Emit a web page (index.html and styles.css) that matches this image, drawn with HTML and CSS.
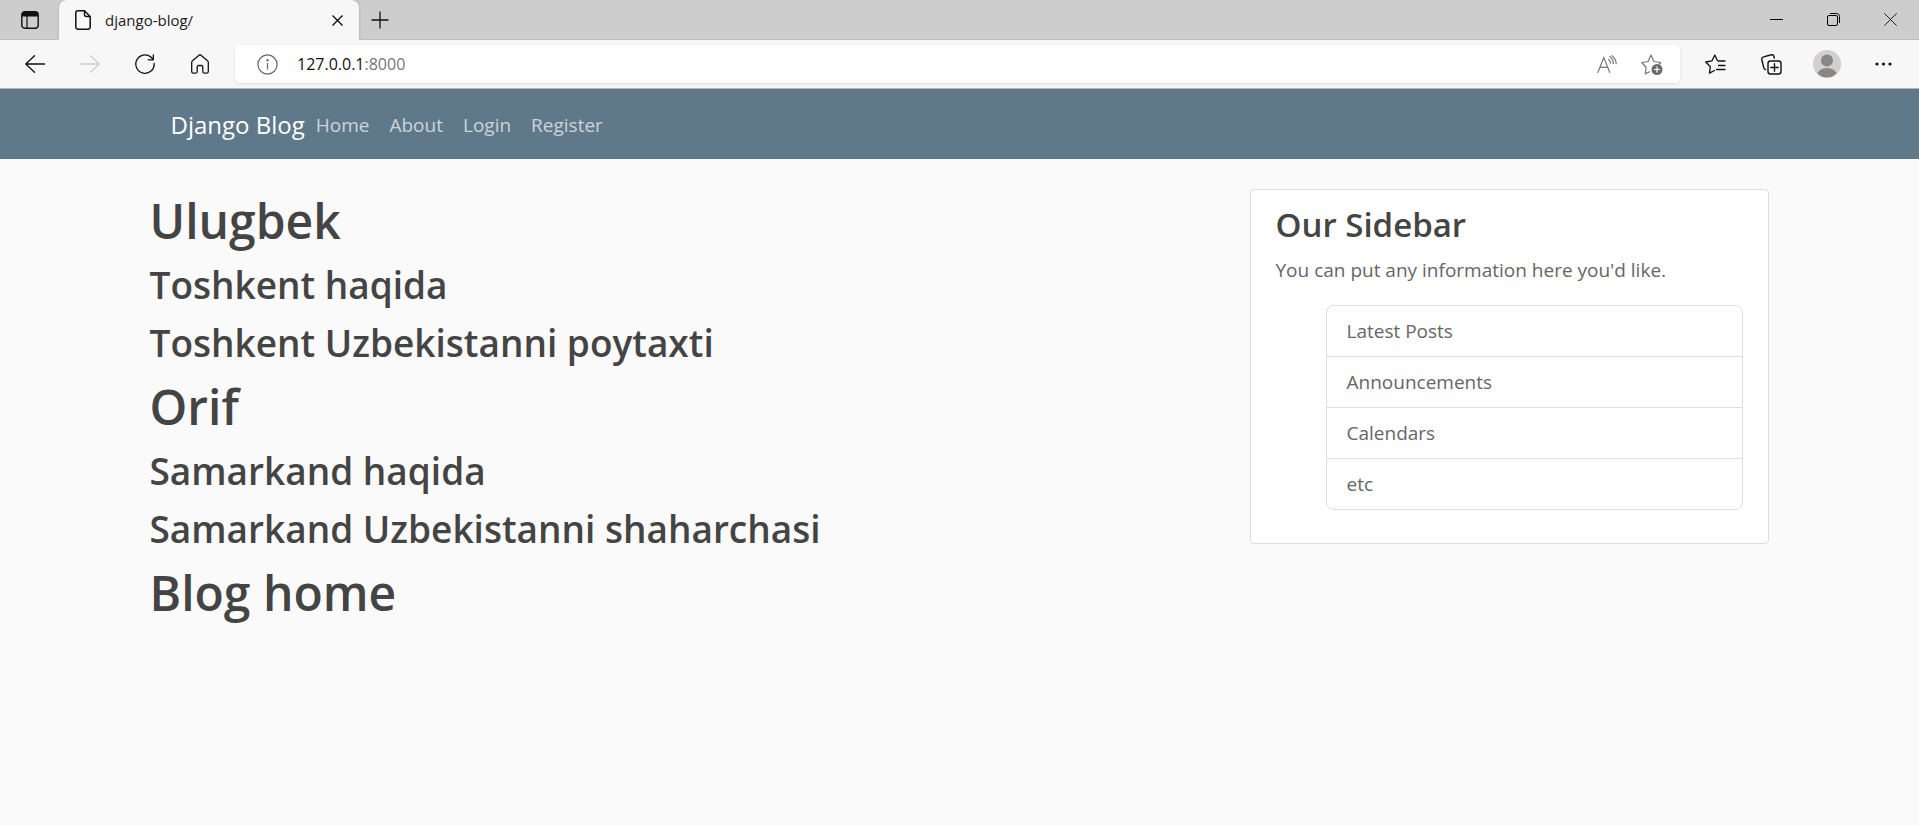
FILE: index.html
```html
<!DOCTYPE html>
<html lang="en">
<head>
<meta charset="utf-8">
<title>django-blog/</title>
<link rel="stylesheet" href="styles.css">
</head>
<body>
<div class="browser">
  <div class="tab-strip">
    <button class="tab-actions" aria-label="Tab actions">
      <svg width="18" height="18" viewBox="0 0 18 18"><rect x="0.8" y="0.8" width="16.4" height="16.4" rx="3" fill="none" stroke="#111" stroke-width="1.4"/><path d="M1 5.5V3.5a2.5 2.5 0 0 1 2.500-2.500h11a2.500 2.500 0 0 1 2.500 2.500v2z" fill="#111"/><path d="M6 5v12" stroke="#111" stroke-width="1.200"/></svg>
    </button>
    <div class="tab">
      <svg width="16" height="20" viewBox="0 0 16 20" fill="none" stroke="#111" stroke-width="1.500" stroke-linejoin="round"><path d="M3 .8h6.500L15.200 6.500V17a2.200 2.200 0 0 1-2.200 2.200H3A2.200 2.200 0 0 1 .8 17V3A2.200 2.200 0 0 1 3 .8z"/><path d="M9.500 1v3.500a2 2 0 0 0 2 2H15"/></svg>
      <span class="tab-title">django-blog/</span>
      <button class="tab-close" aria-label="Close tab"><svg width="11" height="11" viewBox="0 0 11 11" stroke="#111" stroke-width="1.400"><path d="M.5.5l10 10M10.500.5l-10 10"/></svg></button>
    </div>
    <button class="new-tab" aria-label="New tab"><svg width="18" height="18" viewBox="0 0 18 18" stroke="#111" stroke-width="1.300"><path d="M9 0.500v17M.5 9h17"/></svg></button>
    <div class="window-controls">
      <button aria-label="Minimize"><svg width="13" height="13" viewBox="0 0 13 13"><path d="M0 6.500h13" stroke="#000"/></svg></button>
      <button aria-label="Restore"><svg width="13" height="13" viewBox="0 0 13 13" fill="none" stroke="#000"><rect x=".5" y="2.500" width="10" height="10" rx="1.500"/><path d="M3 .5h6.500a3 3 0 0 1 3 3V10"/></svg></button>
      <button aria-label="Close"><svg width="13" height="13" viewBox="0 0 13 13" stroke="#222"><path d="M.3.300l12.400 12.400M12.700.300L.3 12.700"/></svg></button>
    </div>
  </div>
  <div class="toolbar">
    <div class="nav-buttons">
      <button aria-label="Back"><svg width="20" height="18" viewBox="0 0 20 18" fill="none" stroke="#111" stroke-width="1.300" stroke-linecap="round" stroke-linejoin="round"><path d="M9.500.7L.8 9l8.700 8.300M.8 9H19.500"/></svg></button>
      <button aria-label="Forward" disabled><svg width="20" height="18" viewBox="0 0 20 18" fill="none" stroke="#ccc" stroke-width="1.300" stroke-linecap="round" stroke-linejoin="round"><path d="M10.500.7L19.200 9l-8.700 8.300M19.200 9H.5"/></svg></button>
      <button aria-label="Refresh"><svg width="20" height="20" viewBox="0 0 20 20" fill="none" stroke="#111" stroke-width="1.300" stroke-linecap="round" stroke-linejoin="round"><path d="M19.200 9.500A9.200 9.200 0 1 1 15.900 3l2.100 2.300"/><path d="M18.300.8v5h-5"/></svg></button>
      <button aria-label="Home"><svg width="18" height="20" viewBox="0 0 18 20" fill="none" stroke="#111" stroke-width="1.300" stroke-linejoin="round"><path d="M8 1.200a1.500 1.500 0 0 1 2 0l6.500 5.500a2 2 0 0 1 .8 1.600v9.300a1.500 1.500 0 0 1-1.500 1.500h-2.500a1.500 1.500 0 0 1-1.500-1.500V13a1.500 1.500 0 0 0-1.500-1.500H7.700A1.500 1.500 0 0 0 6.200 13v4.600a1.500 1.500 0 0 1-1.500 1.500H2.200a1.500 1.500 0 0 1-1.500-1.500V8.300a2 2 0 0 1 .8-1.600z"/></svg></button>
    </div>
    <div class="address-bar">
      <svg width="21" height="21" viewBox="0 0 21 21" fill="none" stroke="#666" stroke-width="1.200"><circle cx="10.500" cy="10.500" r="9.600"/><path d="M10.500 9v6.500"/><circle cx="10.500" cy="6.300" r=".6" fill="#666"/></svg>
      <div class="address"><span class="host">127.0.0.1</span>:8000</div>
      <button aria-label="Read aloud"><svg width="20" height="19" viewBox="0 0 20 19" fill="none" stroke="#777" stroke-width="1.200" stroke-linecap="round"><path d="M.8 17.500L6.800 2.500l6 15M3 12.300h7.700M11.500 4.300q2 1.500 2.200 4M12.800 1.500q3.400 2.300 3.600 7M15 .7q4 3 4.200 8"/></svg></button>
      <button aria-label="Add to favorites"><svg width="22" height="21" viewBox="0 0 22 21" fill="none" stroke="#777" stroke-width="1.200" stroke-linejoin="round"><path d="M9 17.500l-4.800 2.400 1-6.400L.8 8.500l6.300-1L10 1l2.900 6.500 7 1-2 2"/><circle cx="16" cy="15.500" r="5.500" fill="#6b6b6b" stroke="none"/><path d="M16 12.500v6M13 15.500h6" stroke="#fff"/></svg></button>
    </div>
    <div class="tools">
      <button aria-label="Favorites"><svg width="21" height="20" viewBox="0 0 21 20" fill="none" stroke="#111" stroke-width="1.300" stroke-linejoin="round" stroke-linecap="round"><path d="M9.500 16.500l-5 2.600.8-6.300L.8 8l6.200-1.200L9.800 1l2.400 5.300M13 7h7M13.500 11.500H20M11.500 15.500H20"/></svg></button>
      <button aria-label="Collections"><svg width="21" height="21" viewBox="0 0 21 21" fill="none" stroke="#111" stroke-width="1.400" stroke-linecap="round"><rect x="7" y="7" width="13" height="13" rx="2.500"/><path d="M13.500 9.800v7.400M9.800 13.500h7.400M4.500 15.500a2.500 2.500 0 0 1-1.800-2L.8 5.500a2.200 2.200 0 0 1 1.700-2.600L10.500.8A2.200 2.200 0 0 1 13 2.500l.3 1.500"/></svg></button>
      <button aria-label="Profile"><svg width="28" height="28" viewBox="0 0 28 28"><clipPath id="face"><circle cx="14" cy="14" r="13.300"/></clipPath><circle cx="14" cy="14" r="14" fill="#d2d0ce"/><circle cx="14" cy="10.500" r="6" fill="#8a8683"/><ellipse cx="14" cy="25.500" rx="10" ry="7.500" fill="#8a8683" clip-path="url(#face)"/></svg></button>
      <button aria-label="Settings and more"><svg width="17" height="4" viewBox="0 0 17 4" fill="#111"><circle cx="2" cy="2" r="1.600"/><circle cx="8.500" cy="2" r="1.600"/><circle cx="15" cy="2" r="1.600"/></svg></button>
    </div>
  </div>
</div>
<header class="site-header">
  <nav class="container site-nav">
    <a class="brand" href="#">Django Blog</a>
    <a class="nav-link" href="#">Home</a>
    <a class="nav-link" href="#">About</a>
    <a class="nav-link" href="#">Login</a>
    <a class="nav-link" href="#">Register</a>
  </nav>
</header>
<main class="container row">
  <div class="posts">
    <h1>Ulugbek</h1>
    <h2>Toshkent haqida</h2>
    <h2>Toshkent Uzbekistanni poytaxti</h2>
    <h1>Orif</h1>
    <h2>Samarkand haqida</h2>
    <h2>Samarkand Uzbekistanni shaharchasi</h2>
    <h1>Blog home</h1>
  </div>
  <aside class="sidebar">
    <section class="card">
      <h3>Our Sidebar</h3>
      <p>You can put any information here you'd like.</p>
      <ul class="list">
        <li>Latest Posts</li>
        <li>Announcements</li>
        <li>Calendars</li>
        <li>etc</li>
      </ul>
    </section>
  </aside>
</main>
</body>
</html>
```
FILE: styles.css
```css
* { box-sizing: border-box; }

body {
  margin: 0;
  background: #fafafa;
  color: #333;
  font: 19px/30px "Open Sans", "Noto Sans", sans-serif;
}

button {
  display: flex;
  align-items: center;
  justify-content: center;
  padding: 0;
  border: 0;
  background: none;
}

svg { display: block; flex: none; }

.browser { border-bottom: 1px solid #b4b4b4; background: #f7f7f7; }

.tab-strip {
  display: flex;
  height: 40px;
  background: linear-gradient(#cdcdcd 39px, #c0c0c0 39px);
}

.tab-actions { width: 59px; height: 39px; }

.tab {
  display: flex;
  align-items: center;
  width: 300px;
  padding: 0 16px;
  border-radius: 8px 8px 0 0;
  background: #f7f7f7;
  box-shadow: 0 0 3px #aaa;
  clip-path: inset(0 -4px 0 -4px);
}

.tab-title { flex: 1; padding-left: 14px; color: #1b1b1b; font-size: 15px; line-height: 20px; }
.tab-close { width: 11px; height: 20px; }
.new-tab { width: 42px; height: 39px; }
.window-controls { display: flex; margin-left: auto; }
.window-controls button { width: 57px; height: 39px; }

.toolbar { display: flex; align-items: center; height: 48px; }
.nav-buttons { display: flex; padding-left: 7px; }
.nav-buttons button { width: 55px; height: 40px; }

.address-bar {
  display: flex;
  flex: 1;
  align-items: center;
  height: 38px;
  margin-left: 8px;
  padding: 0 17px 0 22px;
  border-radius: 5px;
  background: #fff;
  box-shadow: 0 1px 3px #ddd;
}

.address { flex: 1; padding-left: 19px; color: #767676; font-size: 16px; line-height: 24px; }
.host { color: #111; }
.address-bar button { margin-left: 24px; }

.tools { display: flex; align-items: center; padding: 0 8px 0 7px; }
.tools button { width: 56px; height: 40px; }

.container { width: 100%; max-width: 1650px; margin: 0 auto; }

.site-header { background: #5f788a; }

.site-nav {
  display: flex;
  align-items: center;
  min-height: 70px;
  padding: 2px 36px 0;
}

.site-nav a { text-decoration: none; }
.brand { margin-right: 1px; color: #fff; font-size: 24px; }
.nav-link { padding: 10px; color: #cbd5db; }

.row { display: flex; margin-top: 30px; }
.posts { width: 66.6667%; padding: 2px 15px 0; }
.sidebar { width: 33.3333%; padding: 0 15px; }

h1, h2, h3 { margin: 0 0 10px; color: #444; font-weight: 600; }
h1 { font-size: 48px; line-height: 60px; }
h2 { font-size: 37px; line-height: 48px; }
h3 { font-size: 33px; line-height: 40px; }

.card {
  padding: 15px 25px 33px;
  border: 1px solid #ddd;
  border-radius: 4px;
  background: #fff;
}

.card p { margin: 0 0 20px; color: #666; }

.list {
  margin: 0 0 0 50px;
  padding: 0;
  border: 1px solid #dfdfdf;
  border-radius: 8px;
  background: #fefefe;
  color: #666;
  list-style: none;
}

.list li { padding: 10px 20px; }
.list li + li { border-top: 1px solid #dfdfdf; }
```
